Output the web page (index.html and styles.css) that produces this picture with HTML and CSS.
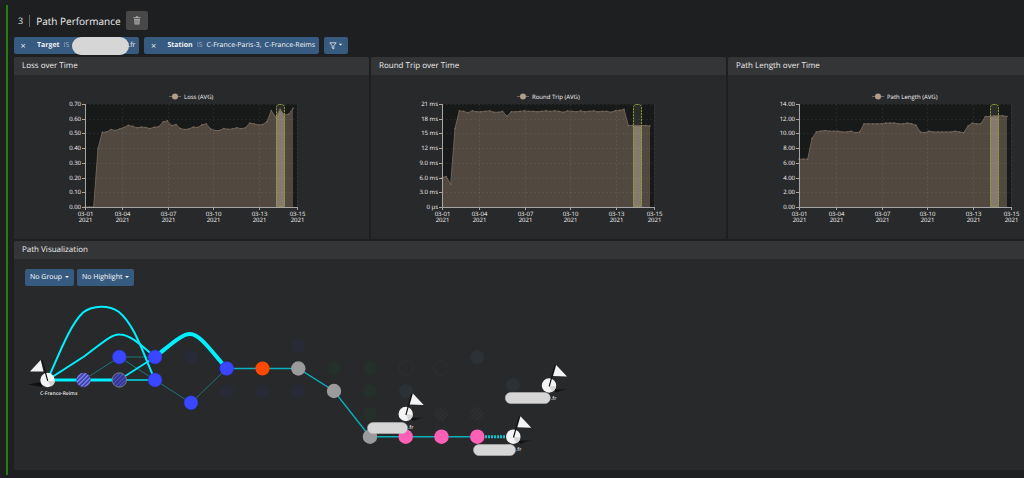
FILE: index.html
```html
<!DOCTYPE html>
<html lang="en">
<head>
<meta charset="utf-8">
<title>Path Performance</title>
<link rel="stylesheet" href="styles.css">
</head>
<body>
<main class="section">
  <header class="title-row">
    <span class="index">3</span>
    <h1 class="title">Path Performance</h1>
    <button class="trash" type="button" aria-label="Delete section">
      <svg width="8" height="9" viewBox="0 0 8 9"><path d="M0.5 1.2h7v1h-7zM2.8 0.3h2.4v1H2.8z" fill="#aaa"/><path d="M1.1 2.9h5.8L6.4 8.6H1.6z" fill="#aaa"/><path d="M2.8 3.8v3.9M4 3.8v3.9M5.2 3.8v3.9" stroke="#555" stroke-width=".5"/></svg>
    </button>
  </header>

  <div class="filters">
    <div class="chip chip-target">
      <button class="remove" type="button" aria-label="Remove target filter">×</button>
      <b>Target</b><span class="op">IS</span><span class="mask"></span><span>.fr</span>
    </div>
    <div class="chip">
      <button class="remove" type="button" aria-label="Remove station filter">×</button>
      <b>Station</b><span class="op">IS</span><span>C-France-Paris-3,</span><span class="second">C-France-Reims</span>
    </div>
    <button class="filter-btn" type="button" aria-label="Add filter">
      <svg width="14" height="8" viewBox="0 0 14 8"><path d="M.8.8h6.4L4.8 3.8v3.2l-1.6-.9V3.8z" fill="none" stroke="#d5dde6" stroke-width=".9"/><path d="M9.8 1.8h3.4l-1.7 1.8z" fill="#fff"/></svg>
    </button>
  </div>

  <div class="panels">
    <section class="panel">
      <h2 class="panel-title">Loss over Time</h2>
      <svg class="chart" id="loss" width="300" height="164"></svg>
    </section>
    <section class="panel">
      <h2 class="panel-title">Round Trip over Time</h2>
      <svg class="chart" id="trip" width="300" height="164"></svg>
    </section>
    <section class="panel">
      <h2 class="panel-title">Path Length over Time</h2>
      <svg class="chart" id="length" width="300" height="164"></svg>
    </section>

    <section class="panel wide">
      <h2 class="panel-title">Path Visualization</h2>
      <div class="controls">
        <label class="picker group"><select aria-label="Group"><option>No Group</option></select></label>
        <label class="picker highlight"><select aria-label="Highlight"><option>No Highlight</option></select></label>
      </div>
      <svg class="network" width="560" height="180" viewBox="14 290 560 180">
        <defs>
          <pattern id="hatch" width="3" height="3" patternUnits="userSpaceOnUse" patternTransform="rotate(45)"><rect width="3" height="3" fill="#3438b4"/><rect width="1.3" height="3" fill="#8c8fe0"/></pattern>
          <pattern id="hatch-dark" width="3" height="3" patternUnits="userSpaceOnUse" patternTransform="rotate(45)"><rect width="3" height="3" fill="#2d2e96"/><rect width="1.3" height="3" fill="#5457ad"/></pattern>
          <pattern id="hatch-faint" width="3" height="3" patternUnits="userSpaceOnUse" patternTransform="rotate(45)"><rect width="3" height="3" fill="#27292a"/><rect width="1.2" height="3" fill="#303234"/></pattern>
          <linearGradient id="shade" x1="0" x2="1"><stop offset="0" stop-color="#0c0c0d"/><stop offset="1" stop-color="#0c0c0d" stop-opacity="0"/></linearGradient>
          <g id="endpoint">
            <path d="M5 4L21 3L7 7z" fill="url(#shade)"/>
            <circle r="7.2" fill="#f4f4f4"/><path d="M0 0L7 1A7 7 0 0 1 3 6.4z" fill="#d5d5d5"/>
            <path d="M.2 .8L6 -20" stroke="#101011" stroke-width="1.2"/>
            <path d="M7.2 -20.4L18 -9L4 -9.4z" fill="#f4f4f4"/>
          </g>
        </defs>

        <g class="faint-blue"><circle cx="191" cy="357" r="7"/><circle cx="298" cy="346" r="7"/><circle cx="227" cy="391" r="7"/><circle cx="262" cy="391" r="7"/><circle cx="298" cy="391" r="7"/></g>
        <g class="faint-green"><circle cx="334" cy="368" r="7"/><circle cx="370" cy="368" r="7"/><circle cx="370" cy="391" r="7"/><circle cx="370" cy="414" r="7"/></g>
        <g class="faint-slate"><circle cx="406" cy="391" r="7"/><circle cx="477" cy="357" r="7"/><circle cx="513" cy="385" r="7"/></g>
        <g class="faint-ring"><circle cx="406" cy="368" r="7"/><circle cx="441" cy="368" r="7"/></g>
        <g fill="url(#hatch-faint)"><circle cx="441" cy="414" r="7"/><circle cx="477" cy="414" r="7"/></g>

        <g class="thin"><path d="M83.5 380L119.300 357H155M119.300 357L155 380L191 403L226.700 368.500"/></g>
        <g class="link">
          <path d="M226.700 368.500H298.300L334 391L370 436.700H477" stroke-width="1.400"/>
          <path d="M119 380H155" stroke-width="2"/>
        </g>
        <path class="dotted" d="M485 436.700H506"/>
        <g class="bright">
          <path d="M47.500 380C60 352 70 325 83 312.500C93 305 109 305 119 312C135 325 144 356 155 380" stroke-width="2"/>
          <path d="M47.500 380L84 356.500C100 345 111 334 119.500 334.500C131 334.500 143 347 155 357" stroke-width="2"/>
          <path d="M119 380L155 357" stroke-width="1.500"/>
          <path d="M47.500 380H119" stroke-width="3"/>
          <path d="M155 357C168 347 181 334 190 334C200 334 211 351 226.700 368.500" stroke-width="4"/>
        </g>

        <g fill="#3a46ff" stroke="#2430b8" stroke-width=".4"><circle cx="119.300" cy="357" r="7"/><circle cx="155" cy="357" r="7"/><circle cx="155" cy="380" r="7"/><circle cx="191" cy="402.700" r="7"/><circle cx="226.700" cy="368.500" r="7"/></g>
        <circle cx="83.500" cy="380" r="7.200" fill="url(#hatch)"/>
        <circle cx="119.300" cy="380" r="7.200" fill="url(#hatch-dark)" stroke="#777a86" stroke-width="1"/>
        <circle cx="262.500" cy="368.500" r="7.100" fill="#ff4800"/>
        <g fill="#9b9b9b"><circle cx="298.300" cy="368.500" r="7.200"/><circle cx="334" cy="391" r="7.200"/><circle cx="370" cy="436.700" r="7.200"/></g>
        <g fill="#ff5fb4"><circle cx="405.700" cy="436.700" r="7.200"/><circle cx="441.500" cy="436.700" r="7.200"/><circle cx="477.300" cy="436.700" r="7.200"/></g>

        <path d="M41 382L28 384.500L42 387z" fill="#101011"/>
        <circle cx="47.500" cy="380" r="7.200" fill="#f4f4f4"/>
        <path d="M47.500 381L55 381A7 7 0 0 1 51 386.500z" fill="#d5d5d5"/>
        <path d="M47.700 380.800L42 360" stroke="#101011" stroke-width="1.200"/>
        <path d="M40.700 360L30 371.400L43.500 371.400z" fill="#f4f4f4"/>

        <use href="#endpoint" x="405.700" y="414"/>
        <use href="#endpoint" x="549" y="385.500"/>
        <use href="#endpoint" x="513.300" y="436.700"/>

        <g fill="#d6d6d6" stroke="#c2c2c2" stroke-width=".5"><rect x="367.500" y="422.500" width="40" height="11" rx="5.500"/><rect x="505.300" y="392.500" width="45" height="11" rx="5.500"/><rect x="473.500" y="444.500" width="42" height="11" rx="5.500"/></g>
        <g class="node-label">
          <text x="40" y="395">C-France-Reims</text>
          <text x="408" y="429">.fr</text><text x="551" y="400">.fr</text><text x="516" y="451">.fr</text>
        </g>
      </svg>
    </section>
  </div>
</main>
<script src="charts.js"></script>
</body>
</html>
```

FILE: styles.css
```css
* { box-sizing: border-box; }
body {
  margin: 0;
  background: #1e1f21;
  color: #e6e6e6;
  font: 7px/10px "Open Sans", "Noto Sans", sans-serif;
  text-rendering: geometricPrecision;
}
button, select { font: inherit; color: inherit; border: 0; margin: 0; padding: 0; text-rendering: inherit; }
svg { display: block; }

.section {
  margin: 5px 0 0 6px;
  padding: 6px 0 5px 6px;
  border-left: 2px solid #23800f;
  overflow: hidden;
}
.title-row { display: flex; align-items: center; height: 19px; padding-left: 4px; }
.index { font-size: 9px; padding-right: 6px; border-right: 1px solid #66686b; line-height: 12px; }
.title { margin: 0 5px 0 6px; font-size: 10px; font-weight: 400; line-height: 14px; color: #f2f2f2; }
.trash {
  display: flex; align-items: center; justify-content: center;
  width: 22px; height: 19px; background: #484848; border-radius: 2px;
}

.filters { display: flex; gap: 5px; margin-top: 7px; }
.chip, .filter-btn {
  display: flex; align-items: center;
  height: 17px; background: #365a80; border-radius: 2px;
}
.chip { padding: 0 4px 0 6px; color: #f0f3f6; }
.remove { width: 6px; margin-right: 11px; background: none; font-size: 9px; }
.op { margin: 0 4px; color: #9fb1c4; }
.second { margin-left: 3px; }
.mask { width: 57px; height: 18px; margin: 0 -1px 0 -1px; border-radius: 9px; background: #d6d6d6; z-index: 1; }
.filter-btn { justify-content: center; width: 24px; }

.panels {
  display: grid; grid-template-columns: repeat(3, 1fr);
  gap: 2px; margin: 3px -59px 0 0;
}
.panel { background: #28292b; border-radius: 2px 2px 0 0; overflow: hidden; }
.wide { grid-column: 1 / -1; }
.panel-title {
  margin: 0; padding: 4px 8px; font-size: 8px; line-height: 10px;
  font-weight: 400; color: #eee; background: #343537;
}

.chart text { font-size: 6px; fill: #f4f4f4; }
.plot { fill: #181a19; }
.grid { stroke: #fff; stroke-opacity: .06; stroke-dasharray: 2 2; fill: none; }
.area { fill: #514840; }
.line { stroke: #6e6256; stroke-width: 1; fill: none; }
.dot { fill: #766a5e; }
.axis { stroke: #a5a5a5; fill: none; }
.band { fill: #d9d4c8; fill-opacity: .1; }
.band-area { fill: #857a6d; }
.band-edge { fill: none; stroke: #929c34; stroke-dasharray: 2 1; }
.legend-line { stroke: #6e655c; }
.legend-mark { fill: #b09e8c; }

.controls { display: flex; gap: 3px; padding: 10px 11px 4px; }
.picker { position: relative; height: 17px; background: #365a80; border-radius: 2px; }
.picker select { appearance: none; width: 100%; height: 17px; padding-left: 5px; background: none; color: #fff; }
.picker::after {
  content: ""; position: absolute; right: 5px; top: 7px;
  border: 2px solid transparent; border-top-color: #fff; border-bottom: 0;
  pointer-events: none;
}
.group { width: 49px; }
.highlight { width: 57px; }

.thin, .link, .bright { fill: none; }
.thin { stroke: #1b777c; stroke-width: 1; }
.link { stroke: #0ab0bc; }
.bright { stroke: #00f0ff; }
.dotted { stroke: #0ac4d0; stroke-width: 3; stroke-dasharray: 2 1; }
.faint-blue { fill: #282b36; }
.faint-green { fill: #26302a; }
.faint-slate { fill: #2c3135; }
.faint-ring { fill: none; stroke: #2d2f31; }
.node-label { font-size: 5px; font-weight: 600; fill: #e6e6e6; }
```

FILE: charts.js
```js
const X0 = 71, Y0 = 29, W = 212, H = 103, STEP = 208 / 48;
const DATES = [[0, "03-01"], [37, "03-04"], [83, "03-07"], [128, "03-10"], [174, "03-13"], [212, "03-15"]];

function draw(id, legend, max, labels, values) {
  const base = Y0 + H;
  const pts = values.map((v, i) => [X0 + i * STEP, base - v / max * H]);
  const path = pts.map(p => p.map(n => n.toFixed(1)).join(" ")).join("L");
  const area = `M${X0} ${base}L${path}V${base}z`;
  const rowY = i => Math.round(Y0 + i * H / 7);
  let grid = "", ticks = "", text = "";
  labels.forEach((label, i) => {
    const y = rowY(i) + .5;
    grid += `M${X0} ${y}h${W}`;
    ticks += `M${X0 - 3} ${y}h3`;
    text += `<text x="${X0 - 4}" y="${y + 1.5}" text-anchor="end">${label}</text>`;
  });
  DATES.forEach(([dx, label]) => {
    const x = X0 + dx + .5;
    grid += `M${x} ${Y0}v${H}`;
    ticks += `M${x} ${base}v3`;
    text += `<text x="${x}" y="${base + 9}" text-anchor="middle">${label}</text>
      <text x="${x}" y="${base + 15}" text-anchor="middle">2021</text>`;
  });
  document.getElementById(id).innerHTML = `
    <clipPath id="${id}-clip"><rect x="${X0 + 191}" y="${Y0}" width="9" height="${H}"/></clipPath>
    <rect class="plot" x="${X0}" y="${Y0}" width="${W}" height="${H}"/>
    <rect class="band" x="${X0 + 191}" y="${Y0}" width="9" height="${H}"/>
    <path class="area" d="${area}"/>
    <path class="band-area" clip-path="url(#${id}-clip)" d="${area}"/>
    <path class="grid" d="${grid}"/>
    <path class="line" d="M${path}"/>
    ${pts.map(p => `<circle class="dot" cx="${p[0]}" cy="${p[1]}" r=".8"/>`).join("")}
    <path class="axis" d="M${X0 + .5} ${Y0}V${base + .5}h${W}${ticks}"/>
    <rect class="band-edge" x="${X0 + 191.5}" y="${Y0 + .5}" width="8" height="${H - 1}" rx="3"/>
    <path class="legend-line" d="M${legend.x} 21.500h12"/>
    <circle class="legend-mark" cx="${legend.x + 6}" cy="21.500" r="3"/>
    <text x="${legend.x + 15}" y="24">${legend.text}</text>${text}`;
}

draw("loss", { text: "Loss (AVG)", x: 155 }, .7,
  ["0.70", "0.60", "0.50", "0.40", "0.30", "0.20", "0.10", "0.00"],
  [0, 0, 0, .398, .507, .51, .527, .52, .53, .54, .555, .548, .538, .543, .54, .533, .542, .545, .578, .585, .553, .56, .533, .527, .53,
   .543, .54, .558, .565, .53, .52, .52, .533, .528, .53, .538, .532, .537, .57, .565, .557, .56, .58, .655, .61, .665, .625, .63, .67]);

draw("trip", { text: "Round Trip (AVG)", x: 146 }, 21,
  ["21 ms", "18 ms", "15 ms", "12 ms", "9.0 ms", "6.0 ms", "3.0 ms", "0 μs"],
  [6, 6.2, 4.6, 16, 19.6, 19.5, 19.2, 19.6, 19.4, 19.4, 19.5, 19.6, 19.3, 19.3, 19.5, 18.5, 19.4, 19.4, 19.5, 19.6, 19.5, 19.5, 19.4, 19.5, 19.6,
   19.5, 19.6, 19.5, 19.3, 19.6, 19.5, 19.4, 19.6, 19.4, 19.5, 19.6, 19.4, 19.5, 19.5, 19.3, 19.6, 19.7, 19.9, 16.6, 16.6, 16.6, 16.6, 16.6, 16.5]);

draw("length", { text: "Path Length (AVG)", x: 144 }, 14,
  ["14.00", "12.00", "10.00", "8.00", "6.00", "4.00", "2.00", "0.00"],
  [6.5, 6.5, 6.5, 9.3, 10.2, 10.3, 10.4, 10.3, 10.3, 10.3, 10.2, 10.2, 10.3, 10.1, 10.2, 11.3, 11.3, 11.3, 11.3, 11.3, 11.4, 11.4, 11.4, 11.3, 11.3,
   11.4, 11.3, 11.1, 10.2, 10.1, 10.3, 10.2, 10.2, 10.2, 10.2, 10.2, 10.3, 10.2, 10.1, 11, 11.4, 11.3, 11.3, 12.3, 12.3, 12.4, 12.4, 12.4, 12.3]);
```
